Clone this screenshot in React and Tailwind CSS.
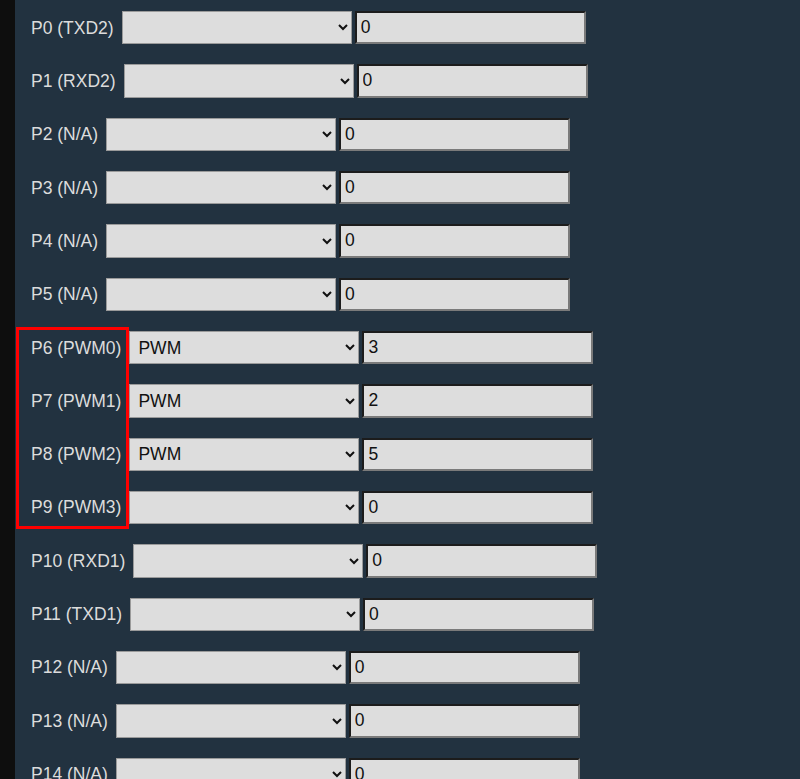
import React from "react";

const pins = [
  { label: "P0 (TXD2)", mode: "", value: "0" },
  { label: "P1 (RXD2)", mode: "", value: "0" },
  { label: "P2 (N/A)", mode: "", value: "0" },
  { label: "P3 (N/A)", mode: "", value: "0" },
  { label: "P4 (N/A)", mode: "", value: "0" },
  { label: "P5 (N/A)", mode: "", value: "0" },
  { label: "P6 (PWM0)", mode: "PWM", value: "3" },
  { label: "P7 (PWM1)", mode: "PWM", value: "2" },
  { label: "P8 (PWM2)", mode: "PWM", value: "5" },
  { label: "P9 (PWM3)", mode: "", value: "0" },
  { label: "P10 (RXD1)", mode: "", value: "0" },
  { label: "P11 (TXD1)", mode: "", value: "0" },
  { label: "P12 (N/A)", mode: "", value: "0" },
  { label: "P13 (N/A)", mode: "", value: "0" },
  { label: "P14 (N/A)", mode: "", value: "0" },
];

function PinRow({ pin }) {
  return (
    <div className="flex items-center h-[53.33px]">
      <span className="text-[#dcdcdc] mr-[8px]">{pin.label}</span>
      <select
        defaultValue={pin.mode}
        className="w-[230px] h-[33.33px] bg-[#dddddd] border border-[#9a9a9a] text-[#111] pl-[4px] text-[17.5px]"
      >
        <option value=""></option>
        <option value="PWM">PWM</option>
      </select>
      <input
        type="text"
        defaultValue={pin.value}
        className="ml-[3px] w-[231px] h-[33.33px] bg-[#dddddd] border-2 border-t-[#1c1c1c] border-l-[#1c1c1c] border-b-[#7a7a7a] border-r-[#7a7a7a] text-[#111] px-[4px] text-[17.5px]"
      />
    </div>
  );
}

export default function App() {
  return (
    <div
      className="flex h-[779px] overflow-hidden text-[17.5px]"
      style={{ fontFamily: '"Liberation Sans", Arial, sans-serif' }}
    >
      <div className="w-[15px] shrink-0 bg-[#0e0e0e]" />
      <div className="relative flex-1 bg-[#223240] pl-[16px] pt-px">
        {pins.map((pin) => (
          <PinRow key={pin.label} pin={pin} />
        ))}
        {/* highlight around PWM pins */}
        <div className="absolute left-[1px] top-[327px] w-[113px] h-[202px] border-[3px] border-[#ff0000] pointer-events-none" />
      </div>
    </div>
  );
}
